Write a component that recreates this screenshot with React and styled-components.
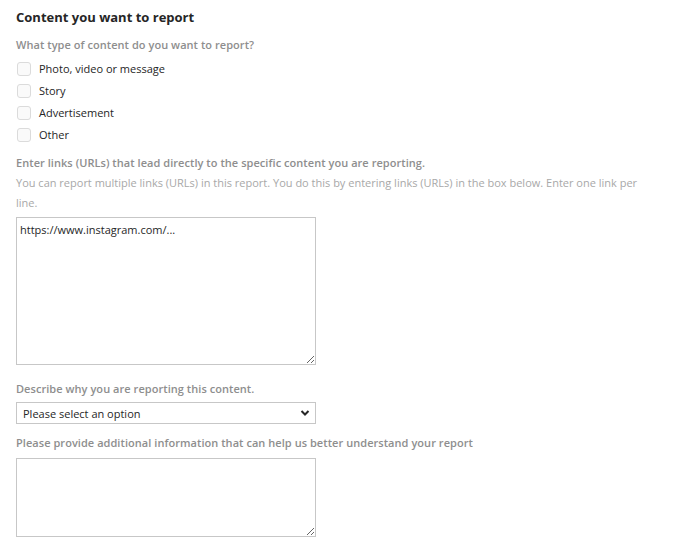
import React from "react";
import styled, { createGlobalStyle } from "styled-components";

const Global = createGlobalStyle`
  html, body { margin: 0; padding: 0; background: #fff; }
  body { font-family: "Open Sans", Arial, sans-serif; }
  * { box-sizing: border-box; }
`;

const Page = styled.div`
  padding: 8px 16px 0 16px;
  width: 686px;
`;

const Title = styled.h2`
  margin: 0;
  font-size: 13px;
  font-weight: 700;
  color: #262626;
  line-height: 18px;
`;

const Label = styled.div`
  margin-top: ${(p) => p.$mt || 0}px;
  font-size: 11px;
  font-weight: 600;
  color: #8e8e8e;
  line-height: 16px;
  letter-spacing: 0.05px;
`;

const Help = styled.p`
  margin: 2px 0 0 0;
  font-size: 11px;
  color: #a8a8a8;
  line-height: 20px;
  width: 640px;
`;

const Options = styled.div`
  display: flex;
  flex-direction: column;
  gap: 8px;
  margin-top: 9px;
`;

const Option = styled.label`
  display: flex;
  align-items: center;
  gap: 8px;
  font-size: 11px;
  color: #262626;
  line-height: 14px;
`;

const Box = styled.span`
  width: 14px;
  height: 14px;
  margin-left: 1px;
  border: 1px solid #dbdbdb;
  border-radius: 3px;
  background: #fafafa;
  flex: none;
`;

const Area = styled.textarea`
  display: block;
  margin-top: ${(p) => p.$mt || 0}px;
  width: 300px;
  height: ${(p) => p.$h}px;
  border: 1px solid #c7c7c7;
  border-radius: 0;
  padding: 4px 3px;
  font-family: "Open Sans", Arial, sans-serif;
  font-size: 11px;
  color: #262626;
  resize: both;
  outline: none;
`;

const SelectBox = styled.div`
  margin-top: 5px;
  width: 300px;
  height: 22px;
  border: 1px solid #c7c7c7;
  display: flex;
  align-items: center;
  justify-content: space-between;
  padding: 0 5px 0 6px;
  font-size: 11px;
  color: #262626;
`;

const options = ["Photo, video or message", "Story", "Advertisement", "Other"];

export default function App() {
  return (
    <Page>
      <Global />
      <Title>Content you want to report</Title>
      <Label $mt={11}>What type of content do you want to report?</Label>
      <Options>
        {options.map((o) => (
          <Option key={o}>
            <Box />
            {o}
          </Option>
        ))}
      </Options>
      <Label $mt={13}>
        Enter links (URLs) that lead directly to the specific content you are reporting.
      </Label>
      <Help>
        You can report multiple links (URLs) in this report. You do this by entering links (URLs) in the box below. Enter one link per line.
      </Help>
      <Area $mt={4} $h={148} defaultValue="https://www.instagram.com/..." />
      <Label $mt={16}>Describe why you are reporting this content.</Label>
      <SelectBox>
        <span>Please select an option</span>
        <svg width="10" height="8" viewBox="0 0 10 8">
          <path d="M1.5 2 L5 5.5 L8.5 2" fill="none" stroke="#262626" strokeWidth="2" />
        </svg>
      </SelectBox>
      <Label $mt={11}>
        Please provide additional information that can help us better understand your report
      </Label>
      <Area $mt={7} $h={79} />
    </Page>
  );
}
